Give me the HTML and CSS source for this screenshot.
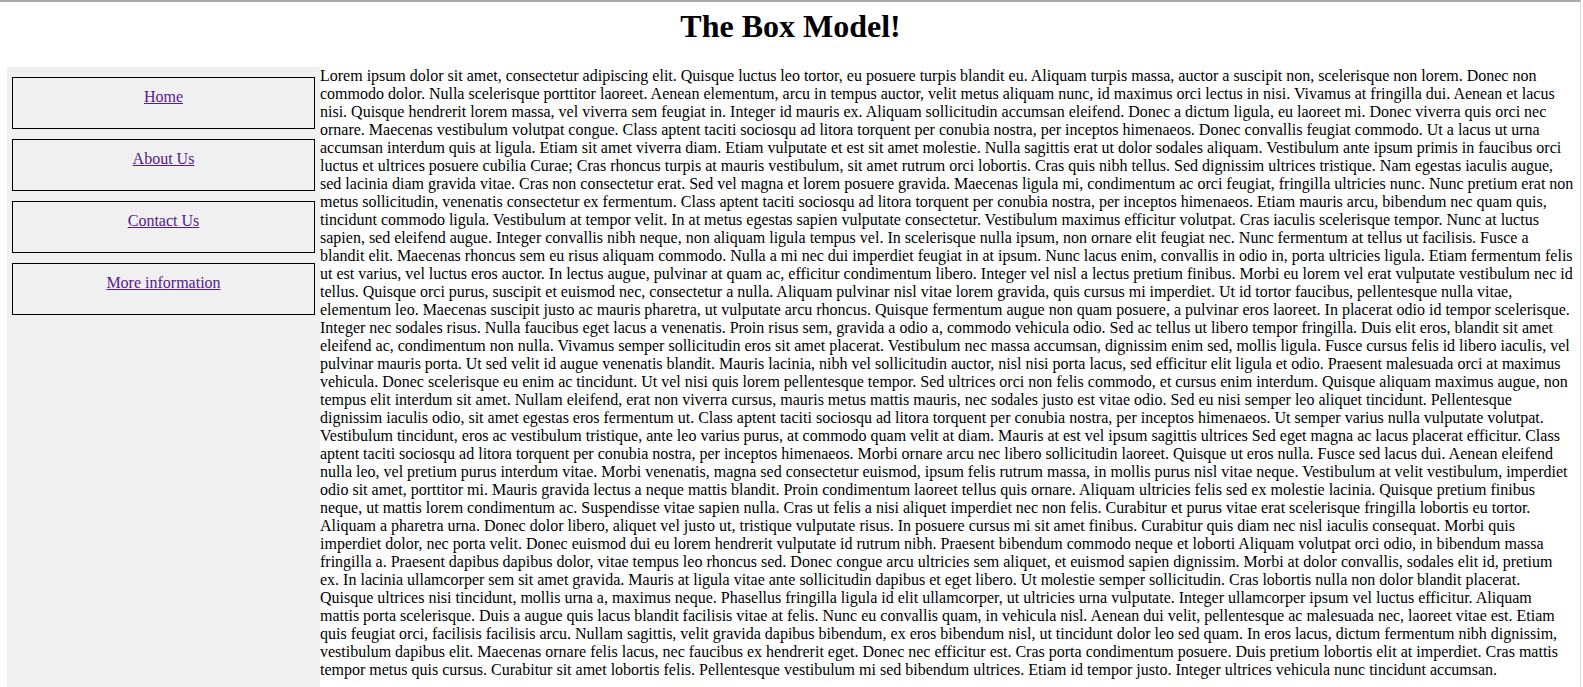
FILE: index.html
```html
<!DOCTYPE html>
<html lang="en">
<head>
<meta charset="utf-8">
<title>The Box Model!</title>
<link rel="stylesheet" href="styles.css">
</head>
<body>
<h1 class="title">The Box Model!</h1>
<div class="layout">
  <nav class="sidebar">
    <ul class="menu">
      <li class="menu-item"><a class="menu-link" href="#">Home</a></li>
      <li class="menu-item"><a class="menu-link" href="#">About Us</a></li>
      <li class="menu-item"><a class="menu-link" href="#">Contact Us</a></li>
      <li class="menu-item"><a class="menu-link" href="#">More information</a></li>
    </ul>
  </nav>
  <main class="content">
    <p class="text">Lorem ipsum dolor sit amet, consectetur adipiscing elit. Quisque luctus leo tortor, eu posuere turpis blandit eu. Aliquam turpis massa, auctor a suscipit non, scelerisque non lorem. Donec non commodo dolor. Nulla scelerisque porttitor laoreet. Aenean elementum, arcu in tempus auctor, velit metus aliquam nunc, id maximus orci lectus in nisi. Vivamus at fringilla dui. Aenean et lacus nisi. Quisque hendrerit lorem massa, vel viverra sem feugiat in. Integer id mauris ex. Aliquam sollicitudin accumsan eleifend. Donec a dictum ligula, eu laoreet mi. Donec viverra quis orci nec ornare. Maecenas vestibulum volutpat congue. Class aptent taciti sociosqu ad litora torquent per conubia nostra, per inceptos himenaeos. Donec convallis feugiat commodo. Ut a lacus ut urna accumsan interdum quis at ligula. Etiam sit amet viverra diam. Etiam vulputate et est sit amet molestie. Nulla sagittis erat ut dolor sodales aliquam. Vestibulum ante ipsum primis in faucibus orci luctus et ultrices posuere cubilia Curae; Cras rhoncus turpis at mauris vestibulum, sit amet rutrum orci lobortis. Cras quis nibh tellus. Sed dignissim ultrices tristique. Nam egestas iaculis augue, sed lacinia diam gravida vitae. Cras non consectetur erat. Sed vel magna et lorem posuere gravida. Maecenas ligula mi, condimentum ac orci feugiat, fringilla ultricies nunc. Nunc pretium erat non metus sollicitudin, venenatis consectetur ex fermentum. Class aptent taciti sociosqu ad litora torquent per conubia nostra, per inceptos himenaeos. Etiam mauris arcu, bibendum nec quam quis, tincidunt commodo ligula. Vestibulum at tempor velit. In at metus egestas sapien vulputate consectetur. Vestibulum maximus efficitur volutpat. Cras iaculis scelerisque tempor. Nunc at luctus sapien, sed eleifend augue. Integer convallis nibh neque, non aliquam ligula tempus vel. In scelerisque nulla ipsum, non ornare elit feugiat nec. Nunc fermentum at tellus ut facilisis. Fusce a blandit elit. Maecenas rhoncus sem eu risus aliquam commodo. Nulla a mi nec dui imperdiet feugiat in at ipsum. Nunc lacus enim, convallis in odio in, porta ultricies ligula. Etiam fermentum felis ut est varius, vel luctus eros auctor. In lectus augue, pulvinar at quam ac, efficitur condimentum libero. Integer vel nisl a lectus pretium finibus. Morbi eu lorem vel erat vulputate vestibulum nec id tellus. Quisque orci purus, suscipit et euismod nec, consectetur a nulla. Aliquam pulvinar nisl vitae lorem gravida, quis cursus mi imperdiet. Ut id tortor faucibus, pellentesque nulla vitae, elementum leo. Maecenas suscipit justo ac mauris pharetra, ut vulputate arcu rhoncus. Quisque fermentum augue non quam posuere, a pulvinar eros laoreet. In placerat odio id tempor scelerisque. Integer nec sodales risus. Nulla faucibus eget lacus a venenatis. Proin risus sem, gravida a odio a, commodo vehicula odio. Sed ac tellus ut libero tempor fringilla. Duis elit eros, blandit sit amet eleifend ac, condimentum non nulla. Vivamus semper sollicitudin eros sit amet placerat. Vestibulum nec massa accumsan, dignissim enim sed, mollis ligula. Fusce cursus felis id libero iaculis, vel pulvinar mauris porta. Ut sed velit id augue venenatis blandit. Mauris lacinia, nibh vel sollicitudin auctor, nisl nisi porta lacus, sed efficitur elit ligula et odio. Praesent malesuada orci at maximus vehicula. Donec scelerisque eu enim ac tincidunt. Ut vel nisi quis lorem pellentesque tempor. Sed ultrices orci non felis commodo, et cursus enim interdum. Quisque aliquam maximus augue, non tempus elit interdum sit amet. Nullam eleifend, erat non viverra cursus, mauris metus mattis mauris, nec sodales justo est vitae odio. Sed eu nisi semper leo aliquet tincidunt. Pellentesque dignissim iaculis odio, sit amet egestas eros fermentum ut. Class aptent taciti sociosqu ad litora torquent per conubia nostra, per inceptos himenaeos. Ut semper varius nulla vulputate volutpat. Vestibulum tincidunt, eros ac vestibulum tristique, ante leo varius purus, at commodo quam velit at diam. Mauris at est vel ipsum sagittis ultrices Sed eget magna ac lacus placerat efficitur. Class aptent taciti sociosqu ad litora torquent per conubia nostra, per inceptos himenaeos. Morbi ornare arcu nec libero sollicitudin laoreet. Quisque ut eros nulla. Fusce sed lacus dui. Aenean eleifend nulla leo, vel pretium purus interdum vitae. Morbi venenatis, magna sed consectetur euismod, ipsum felis rutrum massa, in mollis purus nisl vitae neque. Vestibulum at velit vestibulum, imperdiet odio sit amet, porttitor mi. Mauris gravida lectus a neque mattis blandit. Proin condimentum laoreet tellus quis ornare. Aliquam ultricies felis sed ex molestie lacinia. Quisque pretium finibus neque, ut mattis lorem condimentum ac. Suspendisse vitae sapien nulla. Cras ut felis a nisi aliquet imperdiet nec non felis. Curabitur et purus vitae erat scelerisque fringilla lobortis eu tortor. Aliquam a pharetra urna. Donec dolor libero, aliquet vel justo ut, tristique vulputate risus. In posuere cursus mi sit amet finibus. Curabitur quis diam nec nisl iaculis consequat. Morbi quis imperdiet dolor, nec porta velit. Donec euismod dui eu lorem hendrerit vulputate id rutrum nibh. Praesent bibendum commodo neque et loborti Aliquam volutpat orci odio, in bibendum massa fringilla a. Praesent dapibus dapibus dolor, vitae tempus leo rhoncus sed. Donec congue arcu ultricies sem aliquet, et euismod sapien dignissim. Morbi at dolor convallis, sodales elit id, pretium ex. In lacinia ullamcorper sem sit amet gravida. Mauris at ligula vitae ante sollicitudin dapibus et eget libero. Ut molestie semper sollicitudin. Cras lobortis nulla non dolor blandit placerat. Quisque ultrices nisi tincidunt, mollis urna a, maximus neque. Phasellus fringilla ligula id elit ullamcorper, ut ultricies urna vulputate. Integer ullamcorper ipsum vel luctus efficitur. Aliquam mattis porta scelerisque. Duis a augue quis lacus blandit facilisis vitae at felis. Nunc eu convallis quam, in vehicula nisl. Aenean dui velit, pellentesque ac malesuada nec, laoreet vitae est. Etiam quis feugiat orci, facilisis facilisis arcu. Nullam sagittis, velit gravida dapibus bibendum, ex eros bibendum nisl, ut tincidunt dolor leo sed quam. In eros lacus, dictum fermentum nibh dignissim, vestibulum dapibus elit. Maecenas ornare felis lacus, nec faucibus ex hendrerit eget. Donec nec efficitur est. Cras porta condimentum posuere. Duis pretium lobortis elit at imperdiet. Cras mattis tempor metus quis cursus. Curabitur sit amet lobortis felis. Pellentesque vestibulum mi sed bibendum ultrices. Etiam id tempor justo. Integer ultrices vehicula nunc tincidunt accumsan.</p>
  </main>
</div>
</body>
</html>
```

FILE: styles.css
```css
html {
  border-top: 2px solid #aaaaaa;
  border-right: 1px solid #dddddd;
  margin-right: 2px;
  background: #ffffff;
}

body {
  margin: 6px 6px 0 7px;
  font-family: "Liberation Serif", "Times New Roman", serif;
  font-size: 16px;
  color: #000000;
}

.title {
  margin: 0 0 22px 0;
  font-size: 32px;
  font-weight: bold;
  text-align: center;
  line-height: 37px;
}

.layout {
  display: flex;
  align-items: stretch;
}

.sidebar {
  flex: 0 0 313px;
  background: #f0f0f0;
  padding: 10px 5px;
  box-sizing: border-box;
}

.menu {
  list-style: none;
  margin: 0;
  padding: 0;
}

.menu-item {
  border: 1px solid #000000;
  height: 40px;
  padding-top: 10px;
  margin-bottom: 10px;
  text-align: center;
  line-height: 18px;
}

.menu-link {
  color: #551a8b;
  text-decoration: underline;
}

.content {
  flex: 1 1 auto;
  min-width: 0;
  padding-bottom: 24px;
}

.text {
  margin: 0;
  line-height: 18px;
}
```
